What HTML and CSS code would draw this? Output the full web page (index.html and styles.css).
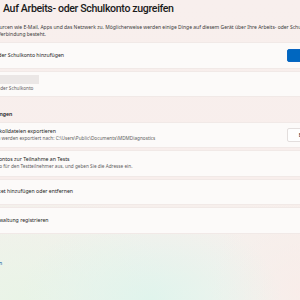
FILE: index.html
```html
<!DOCTYPE html>
<html lang="de">
<head>
    <meta charset="UTF-8">
    <meta name="viewport" content="width=device-width, initial-scale=1.0">
    <title>Auf Arbeits- oder Schulkonto zugreifen</title>
    <link rel="stylesheet" href="styles.css">
</head>
<body>
    <div class="page">
        <h1 class="title">Auf Arbeits- oder Schulkonto zugreifen</h1>
        <p class="desc">
            <span class="desc-line">Greifen Sie auf Ressourcen wie E-Mail, Apps und das Netzwerk zu. Möglicherweise werden einige Dinge auf diesem Gerät über Ihre Arbeits- oder Schulkonto-Organisation</span>
            <span class="desc-line desc-wrap">gesteuert, wenn eine Verbindung besteht.</span>
        </p>

        <div class="cards">
            <div class="card card-add">
                <div class="card-text">
                    <div class="card-title">Ein Arbeits- oder Schulkonto hinzufügen</div>
                </div>
                <button class="btn btn-accent">Verbinden</button>
            </div>
            <div class="card card-account">
                <div class="card-text">
                    <div class="redact"></div>
                    <div class="card-sub">Arbeits- oder Schulkonto</div>
                </div>
            </div>
        </div>

        <div class="section">Verwandte Einstellungen</div>

        <div class="cards">
            <div class="card card-rel">
                <div class="card-text">
                    <div class="card-title">Verwaltungsprotokolldateien exportieren</div>
                    <div class="card-sub">Die Protokolldateien werden exportiert nach: C:\Users\Public\Documents\MDMDiagnostics</div>
                </div>
                <button class="btn">Exportieren</button>
            </div>
            <div class="card card-rel">
                <div class="card-text">
                    <div class="card-title">Einrichten eines Kontos zur Teilnahme an Tests</div>
                    <div class="card-sub">Wählen Sie ein Konto für den Testteilnehmer aus, und geben Sie die Adresse ein.</div>
                </div>
            </div>
            <div class="card card-rel">
                <div class="card-text">
                    <div class="card-title">Bereitstellungspaket hinzufügen oder entfernen</div>
                </div>
            </div>
            <div class="card card-rel">
                <div class="card-text">
                    <div class="card-title">Nur bei Geräteverwaltung registrieren</div>
                </div>
            </div>
        </div>

        <a class="help" href="#">Hilfe erhalten</a>
    </div>
</body>
</html>
```

FILE: styles.css
```css
html,
body {
    margin: 0;
    padding: 0;
    width: 300px;
    height: 300px;
    overflow: hidden;
}

body {
    font-family: 'Noto Sans', 'Open Sans', Arial, sans-serif;
    color: #1b1b1b;
    background:
        radial-gradient(ellipse 130px 90px at 150px 300px, rgba(222, 244, 236, 0.9), rgba(222, 244, 236, 0)),
        radial-gradient(ellipse 150px 120px at 20px 300px, rgba(232, 244, 230, 0.9), rgba(232, 244, 230, 0)),
        radial-gradient(ellipse 90px 110px at 300px 290px, rgba(249, 236, 233, 0.9), rgba(249, 236, 233, 0)),
        linear-gradient(180deg, #f8efed 0%, #f8eeec 60%, #f2f3ee 100%);
}

/* the visible area is a crop of a wider settings page */
.page {
    width: 403px;
    margin-left: -56px;
    display: flex;
    flex-direction: column;
}

.title {
    margin: 0 0 0 59px;
    font-family: Roboto, 'Noto Sans', Arial, sans-serif;
    font-size: 10.6px;
    line-height: 17px;
    font-weight: 500;
    letter-spacing: -0.35px;
    white-space: nowrap;
}

.desc {
    margin: 7px 0 0 6px;
    font-size: 5px;
    line-height: 7px;
    color: #3a3a3a;
}

.desc-line {
    display: block;
    white-space: nowrap;
}

.desc-wrap {
    margin-left: -3px;
}

.cards {
    display: flex;
    flex-direction: column;
    gap: 2px;
}

.desc + .cards {
    margin-top: 4px;
}

.card {
    height: 26.5px;
    box-sizing: border-box;
    display: flex;
    align-items: center;
    padding: 0 7px 0 21px;
    background-color: #fcfaf9;
    border: 1px solid #f1e9e7;
    border-radius: 2px;
}

.card-rel {
    padding-left: 10.5px;
}

.card-account {
    height: 26px;
    padding-left: 34px;
}

.card-text {
    flex-grow: 1;
    min-width: 0;
}

.card-title {
    font-size: 5.2px;
    line-height: 7px;
    white-space: nowrap;
}

.card-sub {
    font-size: 4.7px;
    line-height: 7px;
    color: #5d5d5d;
    white-space: nowrap;
}

.redact {
    width: 100px;
    height: 9px;
    margin-left: -40px;
    margin-bottom: 1px;
    background-color: #ebe7e6;
}

.btn {
    width: 52px;
    height: 13.5px;
    padding: 0;
    border: 1px solid #e3dedd;
    border-radius: 2px;
    background-color: #fefefe;
    color: #1b1b1b;
    font-family: 'Noto Sans', 'Open Sans', Arial, sans-serif;
    font-size: 5.2px;
    flex-shrink: 0;
}

.btn-accent {
    border-color: #0a66c2;
    background-color: #0067c0;
    color: #ffffff;
}

.section {
    margin: 13px 0 4px 5px;
    font-size: 5.2px;
    line-height: 8px;
    font-weight: 600;
    white-space: nowrap;
}

.help {
    margin: 25px 0 0 25px;
    font-size: 5.2px;
    line-height: 8px;
    color: #0f4f98;
    text-decoration: none;
    white-space: nowrap;
}
```
